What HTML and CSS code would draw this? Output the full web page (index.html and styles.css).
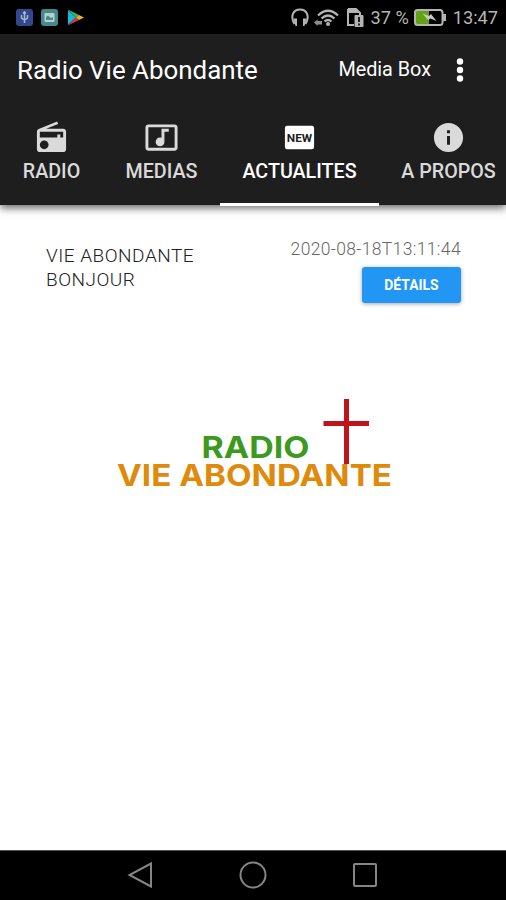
FILE: index.html
```html
<!DOCTYPE html>
<html lang="fr">
<head>
  <meta charset="UTF-8" />
  <meta name="viewport" content="width=device-width, initial-scale=1.0"/>
  <title>Radio Vie Abondante</title>
  <link rel="stylesheet" href="styles.css">
</head>
<body>

  <div class="status-bar">
    <div class="status-left">
      <svg width="17" height="17" viewBox="0 0 17 17"><rect width="17" height="17" rx="3" fill="#32478c"/><path d="M8.500 14V4M5.500 6v3l3 2 3-2V6M7 4.500l1.500-1.700L10 4.500" fill="none" stroke="#aab4cc" stroke-width="1.500"/></svg>
      <svg width="17" height="17" viewBox="0 0 17 17"><rect width="17" height="17" rx="3" fill="#438b8b"/><rect x="3.500" y="4" width="10" height="9" rx="1" fill="#b9cfcf"/><path d="M5 11V8l2-1.500 3 2.500 2-1v3z" fill="#438b8b"/></svg>
      <svg class="play" width="16" height="17" viewBox="0 0 16 17"><path d="M0 1v15l8-7.500z" fill="#1cb5d8"/><path d="M0 .500L11 6 8 8.500z" fill="#35b868"/><path d="M0 16.500L11 11 8 8.500z" fill="#dd3349"/><path d="M11 6l5 2.500L11 11 8 8.500z" fill="#e8b51f"/></svg>
    </div>
    <div class="status-right">
      <svg width="18" height="19" viewBox="0 0 18 19"><path d="M3.500 16C-1 8.500 2 1.500 9 1.500S19 8.500 14.500 16" fill="none" stroke="#b4b4b4" stroke-width="2"/><path d="M2.500 10.500H6V18H4.500zM15.500 10.500H12V18h1.500z" fill="#b4b4b4"/></svg>
      <svg class="wifi" width="25" height="19" viewBox="0 0 25 19"><path d="M4 7.500Q14-2 24 7.500M7.500 10.500Q14 4.500 20.500 10.500M10.500 13.500Q14 10.500 17.500 13.500" fill="none" stroke="#b4b4b4" stroke-width="2.200"/><circle cx="14" cy="16" r="2" fill="#b4b4b4"/><path d="M0 14.500l3.500-3v1.500H8v3.500H3.500v1.500z" fill="#8e8e8e"/></svg>
      <svg class="sim" width="17" height="19" viewBox="0 0 17 19"><path d="M1 1h8l4 4v2M1 1v16h6" fill="none" stroke="#b4b4b4" stroke-width="2"/><path d="M1 1h8l4 4H1z" fill="#b4b4b4"/><rect x="7.500" y="7" width="9" height="12" rx="1" fill="#b4b4b4"/><path d="M12 9v5M12 15.500v2" stroke="#111" stroke-width="1.800"/></svg>
      <span class="percent">37 %</span>
      <svg class="battery" width="33" height="19" viewBox="0 0 33 19"><rect x="2" y="3" width="13" height="13" fill="#63a313"/><rect x="1" y="2" width="27.500" height="15" rx="2.500" fill="none" stroke="#b4b4b4" stroke-width="2"/><path d="M29 6h3v7h-3z" fill="#b4b4b4"/><path d="M8.500 5.500l6.500 2.500L17 6l5.500 7-6-2.500L14 12z" fill="#c8c8c8"/></svg>
      <span class="clock">13:47</span>
    </div>
  </div>

  <header>
    <div class="toolbar">
      <h1>Radio Vie Abondante</h1>
      <span class="media-box">Media Box</span>
      <svg class="more" width="8" height="26" viewBox="0 0 8 26"><circle cx="4" cy="4.500" r="3.200"/><circle cx="4" cy="13" r="3.200"/><circle cx="4" cy="21.500" r="3.200"/></svg>
    </div>
    <nav class="tabs">
      <a class="tab tab-radio">
        <svg viewBox="0 0 24 24"><path d="M3.240 6.150C2.510 6.430 2 7.170 2 8v12c0 1.100.89 2 2 2h16c1.110 0 2-.9 2-2V8c0-1.110-.89-2-2-2H8.300l8.260-3.340L15.880 1 3.240 6.150zM7 20c-1.660 0-3-1.340-3-3s1.340-3 3-3 3 1.340 3 3-1.340 3-3 3zm13-8h-2v-2h-2v2H4V8h16v4z"/></svg>
        <span>RADIO</span>
      </a>
      <a class="tab tab-medias">
        <svg viewBox="0 0 24 24"><path d="M21 3H3c-1.110 0-2 .89-2 2v14c0 1.100.89 2 2 2h18c1.100 0 2-.9 2-2V5c0-1.110-.9-2-2-2zm0 16H3V5h18v14zM8 15c0-1.660 1.340-3 3-3 .35 0 .69.07 1 .18V6h5v2h-3v7.030c-.02 1.640-1.350 2.970-3 2.970-1.660 0-3-1.340-3-3z"/></svg>
        <span>MEDIAS</span>
      </a>
      <a class="tab tab-news active">
        <svg viewBox="0 0 24 24"><rect x="2" y="4" width="20" height="16" rx="1.500"/><text class="new-label" x="3.300" y="15" textLength="17.400" lengthAdjust="spacingAndGlyphs">NEW</text></svg>
        <span>ACTUALITES</span>
      </a>
      <a class="tab tab-about">
        <svg viewBox="0 0 24 24"><path d="M12 2C6.480 2 2 6.480 2 12s4.480 10 10 10 10-4.480 10-10S17.520 2 12 2zm1 15h-2v-6h2v6zm0-8h-2V7h2v2z"/></svg>
        <span>A PROPOS</span>
      </a>
    </nav>
  </header>

  <main>
    <div class="news-item">
      <p class="news-title">VIE ABONDANTE BONJOUR</p>
      <div class="news-side">
        <span class="date">2020-08-18T13:11:44</span>
        <button class="details">DÉTAILS</button>
      </div>
    </div>
    <svg class="logo" width="290" height="100" viewBox="0 0 290 100">
      <path d="M238.500 4v65M215.500 28.500h45.500" stroke="#c0141c" stroke-width="5"/>
      <text class="logo-radio" x="93.500" y="62.500" textLength="108" lengthAdjust="spacingAndGlyphs">RADIO</text>
      <text class="logo-vie" x="9" y="90.500" textLength="275" lengthAdjust="spacingAndGlyphs">VIE ABONDANTE</text>
    </svg>
  </main>

  <div class="nav-bar">
    <svg width="28" height="28" viewBox="0 0 28 28"><path d="M24 2.500v23L2.500 14z"/></svg>
    <svg width="28" height="28" viewBox="0 0 28 28"><circle cx="14" cy="14" r="12.500"/></svg>
    <svg width="28" height="28" viewBox="0 0 28 28"><rect x="3" y="3" width="22" height="22" rx="1"/></svg>
  </div>

</body>
</html>
```
FILE: styles.css
```css
* {
  box-sizing: border-box;
}

body {
  margin: 0;
  height: 900px;
  display: flex;
  flex-direction: column;
  font-family: Roboto, sans-serif;
  background-color: #fff;
  overflow: hidden;
}

.status-bar {
  height: 34px;
  flex: none;
  display: flex;
  align-items: center;
  justify-content: space-between;
  padding: 1px 8px 0 16px;
  background-color: #000;
  color: #b4b4b4;
  font-size: 18.2px;
}

.status-left,
.status-right {
  display: flex;
  align-items: center;
}

.status-left {
  gap: 8px;
}

.play {
  margin-left: 2px;
}

.wifi {
  margin-left: 5px;
}

.sim {
  margin-left: 8px;
}

.percent {
  margin-left: 6px;
  white-space: nowrap;
}

.battery {
  margin: 0 6px 0 5px;
}

header {
  height: 171px;
  flex: none;
  background-color: #1e1e1e;
  color: #fff;
  box-shadow: 0 3px 8px rgba(0,0,0,0.6);
}

.toolbar {
  height: 72px;
  display: flex;
  align-items: center;
  padding: 0 42px 0 17px;
}

.toolbar h1 {
  margin: 0;
  flex: 1;
  font-size: 25.9px;
  font-weight: 400;
}

.media-box {
  margin-top: -2px;
  font-size: 19.8px;
}

.more {
  margin-left: 25px;
  fill: #fff;
}

.tabs {
  height: 100px;
  display: flex;
}

.tab {
  flex: none;
  display: flex;
  flex-direction: column;
  align-items: center;
  padding-top: 14px;
  color: #dadada;
  fill: #dadada;
  font-size: 19.7px;
  font-weight: 500;
  line-height: 24px;
  white-space: nowrap;
}

.tab svg {
  width: 35px;
  height: 35px;
  margin-bottom: 5px;
}

.tab-radio {
  width: 103px;
}

.tab-medias {
  width: 117px;
}

.tab-news {
  width: 159px;
}

.tab-about {
  width: 139px;
}

.tab.active {
  color: #fff;
  fill: #fff;
  border-bottom: 3px solid #fff;
}

.new-label {
  font-size: 8px;
  font-weight: 700;
  fill: #1e1e1e;
}

main {
  flex: 1;
  display: flex;
  flex-direction: column;
  align-items: center;
}

.news-item {
  width: 416px;
  display: flex;
  justify-content: space-between;
  padding-top: 34px;
}

.news-title {
  width: 170px;
  margin: 5px 0 0 1px;
  color: #222;
  font-size: 19px;
  font-weight: 300;
  line-height: 24px;
  letter-spacing: 0.5px;
}

.news-side {
  display: flex;
  flex-direction: column;
  align-items: flex-end;
}

.date {
  color: #666;
  font-size: 17.5px;
  font-weight: 300;
  line-height: 20px;
  letter-spacing: 0.35px;
}

.details {
  width: 99px;
  height: 36px;
  margin-top: 8px;
  border: none;
  border-radius: 3px;
  background-color: #2196f3;
  color: #fff;
  font-family: Roboto, sans-serif;
  font-size: 13.9px;
  font-weight: 700;
  box-shadow: 0 1px 4px rgba(0,0,0,0.35);
}

.logo {
  margin-top: 92px;
}

.logo-radio,
.logo-vie {
  font-family: Inter, sans-serif;
  font-size: 30px;
  font-weight: 700;
}

.logo-radio {
  fill: #3e991f;
}

.logo-vie {
  fill: #e08a0c;
}

.nav-bar {
  height: 50px;
  flex: none;
  display: flex;
  align-items: center;
  justify-content: center;
  gap: 84px;
  padding-bottom: 1px;
  border-top: 1px solid #555;
  background-color: #000;
}

.nav-bar svg {
  fill: none;
  stroke: #858585;
  stroke-width: 2;
}
```
